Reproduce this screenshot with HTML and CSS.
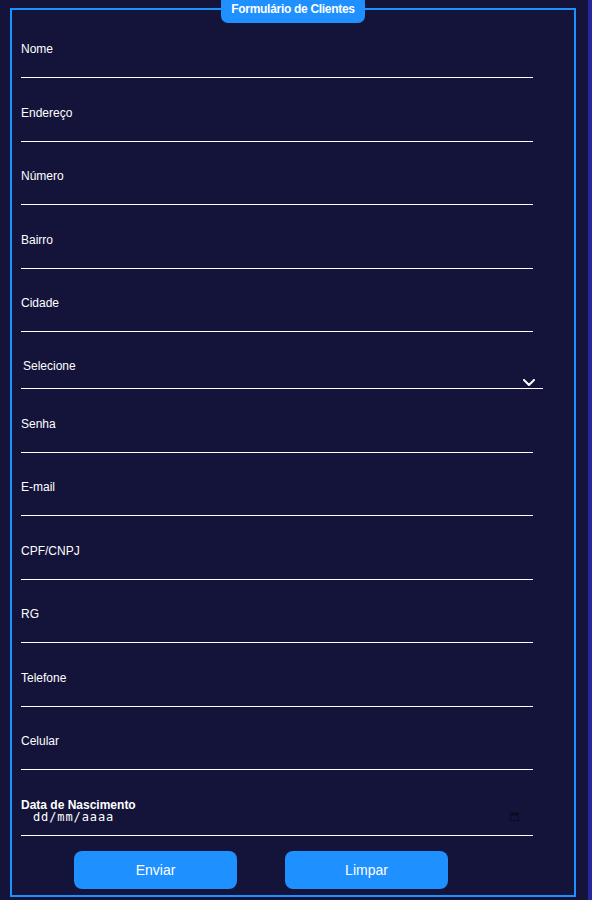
FILE: index.html
```html
<!DOCTYPE html>
<html lang="pt-BR">
<head>
<meta charset="utf-8">
<title>Formulário de Clientes</title>
<link rel="stylesheet" href="styles.css">
</head>
<body>
<form class="form">
  <fieldset class="box">
    <legend class="box-title">Formulário de Clientes</legend>

    <div class="field field-first">
      <label class="field-label" for="nome">Nome</label>
      <input class="field-input" id="nome" type="text">
    </div>
    <div class="field">
      <label class="field-label" for="endereco">Endereço</label>
      <input class="field-input" id="endereco" type="text">
    </div>
    <div class="field">
      <label class="field-label" for="numero">Número</label>
      <input class="field-input" id="numero" type="text">
    </div>
    <div class="field">
      <label class="field-label" for="bairro">Bairro</label>
      <input class="field-input" id="bairro" type="text">
    </div>
    <div class="field">
      <label class="field-label" for="cidade">Cidade</label>
      <input class="field-input" id="cidade" type="text">
    </div>

    <div class="select-wrap">
      <select class="field-select" id="estado">
        <option>Selecione</option>
      </select>
      <svg class="select-chevron" width="12" height="7" viewBox="0 0 12 7" aria-hidden="true">
        <polyline points="1,1 6,6 11,1" fill="none" stroke="#ffffff" stroke-width="2" stroke-linecap="round" stroke-linejoin="round"/>
      </svg>
    </div>

    <div class="field">
      <label class="field-label" for="senha">Senha</label>
      <input class="field-input" id="senha" type="password">
    </div>
    <div class="field">
      <label class="field-label" for="email">E-mail</label>
      <input class="field-input" id="email" type="email">
    </div>
    <div class="field">
      <label class="field-label" for="cpf">CPF/CNPJ</label>
      <input class="field-input" id="cpf" type="text">
    </div>
    <div class="field">
      <label class="field-label" for="rg">RG</label>
      <input class="field-input" id="rg" type="text">
    </div>
    <div class="field">
      <label class="field-label" for="telefone">Telefone</label>
      <input class="field-input" id="telefone" type="tel">
    </div>
    <div class="field">
      <label class="field-label" for="celular">Celular</label>
      <input class="field-input" id="celular" type="tel">
    </div>
    <div class="field">
      <label class="field-label field-label-strong" for="nascimento">Data de Nascimento</label>
      <div class="date-wrap">
        <input class="field-input field-date" id="nascimento" type="text" placeholder="dd/mm/aaaa" inputmode="numeric">
        <svg class="date-icon" width="9" height="9" viewBox="0 0 9 9" aria-hidden="true">
          <rect x="0.5" y="1.5" width="8" height="7" fill="none" stroke="#0a0a22" stroke-width="1"/>
          <rect x="0.5" y="1.5" width="8" height="2" fill="#0a0a22"/>
          <rect x="2" y="0" width="1" height="2" fill="#0a0a22"/>
          <rect x="6" y="0" width="1" height="2" fill="#0a0a22"/>
        </svg>
      </div>
    </div>

    <div class="actions">
      <button class="btn" type="submit">Enviar</button>
      <button class="btn" type="reset">Limpar</button>
    </div>
  </fieldset>
</form>
</body>
</html>
```

FILE: styles.css
```css
html {
  background: #27279c;
}

body {
  margin: 0;
  width: 588px;
  min-height: 900px;
  background: #14143b;
  font-family: "Liberation Sans", Arial, sans-serif;
  color: #ffffff;
}

.form {
  margin: 0;
}

.box {
  margin: -5px 12px 0 10px;
  padding: 0 9px 6px 9px;
  border: 2px solid #1e90ff;
  min-width: 0;
}

.box-title {
  margin: 0 auto;
  padding: 0 10px;
  height: 28px;
  line-height: 29px;
  box-sizing: border-box;
  background: #1e90ff;
  border-radius: 7px;
  font-size: 12px;
  font-weight: bold;
  letter-spacing: -0.3px;
  color: #ffffff;
}

.field {
  display: flex;
  flex-direction: column;
  margin-top: 27.5px;
}

.field-first {
  margin-top: 19px;
}

.field-label {
  display: block;
  height: 14px;
  line-height: 14px;
  font-size: 12px;
  color: #ffffff;
}

.field-label-strong {
  font-weight: bold;
}

.field-input {
  display: block;
  width: 512px;
  height: 22px;
  box-sizing: border-box;
  margin: 0;
  padding: 0 2px;
  border: 0;
  border-bottom: 1px solid #ffffff;
  background: transparent;
  color: #ffffff;
  font-family: "Liberation Sans", Arial, sans-serif;
  font-size: 12px;
  outline: none;
}

.date-wrap {
  position: relative;
  width: 512px;
}

.field-date {
  height: 24.5px;
  padding: 0 0 12px 12px;
  font-family: "DejaVu Sans Mono", monospace;
  font-size: 12px;
  letter-spacing: 0.9px;
  line-height: 12px;
}

.field-date::placeholder {
  color: #ffffff;
  opacity: 1;
}

.date-icon {
  position: absolute;
  right: 14px;
  top: 0;
}

.select-wrap {
  position: relative;
  width: 522px;
  margin-top: 20px;
}

.field-select {
  display: block;
  width: 522px;
  height: 37px;
  box-sizing: border-box;
  margin: 0;
  padding: 0 0 8px 2px;
  border: 0;
  border-bottom: 1px solid #ffffff;
  border-radius: 0;
  background: transparent;
  color: #ffffff;
  font-family: "Liberation Sans", Arial, sans-serif;
  font-size: 12px;
  -webkit-appearance: none;
  appearance: none;
  outline: none;
}

.select-chevron {
  position: absolute;
  right: 8px;
  bottom: 3px;
}

.actions {
  display: flex;
  gap: 48px;
  margin-top: 15px;
  padding-left: 53px;
}

.btn {
  width: 163px;
  height: 38px;
  padding: 0;
  border: 0;
  border-radius: 8px;
  background: #1e90ff;
  color: #ffffff;
  font-family: "Liberation Sans", Arial, sans-serif;
  font-size: 14px;
  line-height: 35px;
  cursor: pointer;
}
```
